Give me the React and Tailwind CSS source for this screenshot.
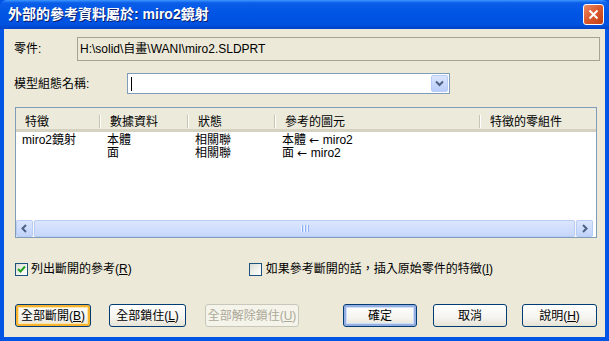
import React from "react";

const UI_FONT = "font-['Liberation_Sans','Noto_Sans_CJK_TC',sans-serif]";

// XP style underlined accelerator, e.g. (B)
const Acc = ({ k }) => (
  <span>
    (<span className="underline">{k}</span>)
  </span>
);

const XpButton = ({ children, variant = "normal", className = "" }) => {
  const ring =
    variant === "hot"
      ? "shadow-[inset_0_0_0_2px_#f8b330,inset_0_0_0_3px_#ffe6a6]"
      : variant === "default"
      ? "shadow-[inset_0_0_0_2px_#97aee2,inset_0_0_0_3px_#cde0fb]"
      : "";
  if (variant === "disabled") {
    return (
      <div
        className={`h-[23px] flex items-center justify-center rounded-[3px] border border-[#c9c7ba] bg-[#f5f4ea] text-[#aca899] text-[12px] ${className}`}
      >
        {children}
      </div>
    );
  }
  return (
    <div
      className={`h-[23px] flex items-center justify-center rounded-[3px] border border-[#003c74] bg-[linear-gradient(to_bottom,#ffffff_0%,#f5f4ef_60%,#e6e3d6_100%)] text-black text-[12px] ${ring} ${className}`}
    >
      {children}
    </div>
  );
};

const Checkbox = ({ checked }) => (
  <div className="w-[13px] h-[13px] border border-[#1c5180] bg-[linear-gradient(135deg,#dcdcd6_0%,#f4f4f0_60%,#ffffff_100%)] flex items-center justify-center">
    {checked && (
      <svg width="9" height="9" viewBox="0 0 9 9">
        <path d="M1 4 L3.5 6.5 L8 1.5" stroke="#21a121" strokeWidth="2" fill="none" />
      </svg>
    )}
  </div>
);

const ScrollArrow = ({ dir }) => (
  <div className="w-[17px] h-[17px] rounded-[2px] border border-[#b8ccf8] bg-[linear-gradient(to_bottom,#dbe6fd_0%,#c1d3fb_100%)] flex items-center justify-center">
    <svg width="7" height="9" viewBox="0 0 7 9">
      {dir === "left" ? (
        <path d="M5 1 L1.5 4.5 L5 8" stroke="#4d6185" strokeWidth="2" fill="none" />
      ) : (
        <path d="M2 1 L5.5 4.5 L2 8" stroke="#4d6185" strokeWidth="2" fill="none" />
      )}
    </svg>
  </div>
);

// the reference arrow is wider than the Arial one
const RefArrow = () => (
  <span className="font-['DejaVu_Sans',sans-serif]">←</span>
);

const columns = [
  { label: "特徵", w: "w-[85px]" },
  { label: "數據資料", w: "w-[88px]" },
  { label: "狀態", w: "w-[87px]" },
  { label: "參考的圖元", w: "w-[205px]" },
  { label: "特徵的零組件", w: "flex-1" },
];

const rows = [
  ["miro2鏡射", "本體", "相關聯", "本體"],
  ["", "面", "相關聯", "面"],
];

export default function App() {
  return (
    <div className={`w-[609px] h-[341px] flex flex-col bg-[#0055e5] ${UI_FONT}`}>
      {/* Title bar */}
      <div className="h-[29px] shrink-0 flex items-center justify-between pl-[8px] pr-[5px] rounded-t-[7px] bg-[linear-gradient(to_bottom,#3d95ff_0%,#0a5ee8_10%,#0055e5_45%,#0052e0_85%,#0043c4_100%)]">
        <span className="text-white text-[14px] font-bold [text-shadow:1px_1px_0_#0a1e6e]">
          外部的參考資料屬於: miro2鏡射
        </span>
        <div className="w-[21px] h-[21px] rounded-[3px] border border-white bg-[linear-gradient(135deg,#ec8a66_0%,#d9582d_50%,#c13f12_100%)] flex items-center justify-center">
          <svg width="11" height="11" viewBox="0 0 11 11">
            <path d="M1.5 1.5 L9.5 9.5 M9.5 1.5 L1.5 9.5" stroke="white" strokeWidth="2" />
          </svg>
        </div>
      </div>

      {/* Body */}
      <div className="flex-1 flex flex-col mx-[4px] mb-[4px] bg-[#ece9d8] text-[12px] text-black">
        {/* Part path */}
        <div className="flex items-center mt-[8px] pl-[10px] pr-[5px]">
          <span className="w-[63px]">零件:</span>
          <div className="flex-1 h-[24px] flex items-center pl-[2px] border border-[#a5a296] bg-[#ece9d8]">
            H:\solid\自畫\WANI\miro2.SLDPRT
          </div>
        </div>

        {/* Configuration name */}
        <div className="flex items-center mt-[12px] pl-[10px]">
          <span className="w-[113px]">模型組態名稱:</span>
          <div className="w-[323px] h-[21px] flex items-center justify-between border border-[#7f9db9] bg-white pl-[3px] pr-[1px]">
            <div className="w-px h-[14px] bg-black" />
            <div className="w-[17px] h-[17px] rounded-[2px] border border-[#b8ccf8] bg-[linear-gradient(to_bottom,#dbe6fd_0%,#b9cdfb_100%)] flex items-center justify-center">
              <svg width="9" height="7" viewBox="0 0 9 7">
                <path d="M1 1.5 L4.5 5 L8 1.5" stroke="#4d6185" strokeWidth="2" fill="none" />
              </svg>
            </div>
          </div>
        </div>

        {/* List view */}
        <div className="mt-[13px] ml-[11px] mr-[8px] h-[131px] flex flex-col border border-[#7f9db9] bg-white">
          <div className="h-[24px] shrink-0 flex items-start bg-[#ebeadb] border-b-[3px] border-[#d6d2c2]">
            {columns.map((c, i) => (
              <div
                key={c.label}
                className={`${c.w} h-full relative pl-[9px] pt-[7px] leading-[14px]`}
              >
                {c.label}
                {i < columns.length - 1 && (
                  <div className="absolute right-0 top-[7px] bottom-[1px] w-[2px] border-l border-[#c7c5b2] border-r border-r-white" />
                )}
              </div>
            ))}
          </div>
          <div className="flex-1 pt-[2px]">
            {rows.map((r, i) => (
              <div key={i} className="h-[13px] flex items-center leading-[13px]">
                {r.map((cell, j) => (
                  <div key={j} className={`${columns[j].w} pl-[6px] whitespace-nowrap`}>
                    {cell}
                    {j === 3 && (
                      <>
                        {" "}
                        <RefArrow /> miro2
                      </>
                    )}
                  </div>
                ))}
              </div>
            ))}
          </div>
          {/* Horizontal scrollbar */}
          <div className="h-[17px] shrink-0 flex items-center bg-[#f7f6f1] mr-[3px]">
            <ScrollArrow dir="left" />
            <div className="flex-1 h-[17px] mx-[1px] rounded-[2px] border border-[#b8ccf8] bg-[linear-gradient(to_bottom,#dbe6fd_0%,#c7d7fc_100%)] flex items-center justify-center">
              <div className="flex gap-[1px]">
                <div className="w-[2px] h-[7px] border-l border-[#eef4fe] border-r border-r-[#8cb0f8]" />
                <div className="w-[2px] h-[7px] border-l border-[#eef4fe] border-r border-r-[#8cb0f8]" />
                <div className="w-[2px] h-[7px] border-l border-[#eef4fe] border-r border-r-[#8cb0f8]" />
              </div>
            </div>
            <ScrollArrow dir="right" />
          </div>
        </div>

        {/* Options */}
        <div className="flex items-center mt-[22px] pl-[11px]">
          <Checkbox checked />
          <span className="ml-[3px]">
            列出斷開的參考<Acc k="R" />
          </span>
          <div className="ml-[117px]">
            <Checkbox />
          </div>
          <span className="ml-[4px]">
            如果參考斷開的話，插入原始零件的特徵<Acc k="I" />
          </span>
        </div>

        {/* Buttons */}
        <div className="flex items-center mt-[26px] pl-[11px]">
          <XpButton variant="hot" className="w-[76px]">
            全部斷開<Acc k="B" />
          </XpButton>
          <XpButton className="w-[77px] ml-[18px]">
            全部鎖住<Acc k="L" />
          </XpButton>
          <XpButton variant="disabled" className="w-[94px] ml-[19px]">
            全部解除鎖住<Acc k="U" />
          </XpButton>
          <XpButton variant="default" className="w-[74px] ml-[44px]">
            確定
          </XpButton>
          <XpButton className="w-[74px] ml-[16px]">取消</XpButton>
          <XpButton className="w-[75px] ml-[15px]">
            說明<Acc k="H" />
          </XpButton>
        </div>
      </div>
    </div>
  );
}
